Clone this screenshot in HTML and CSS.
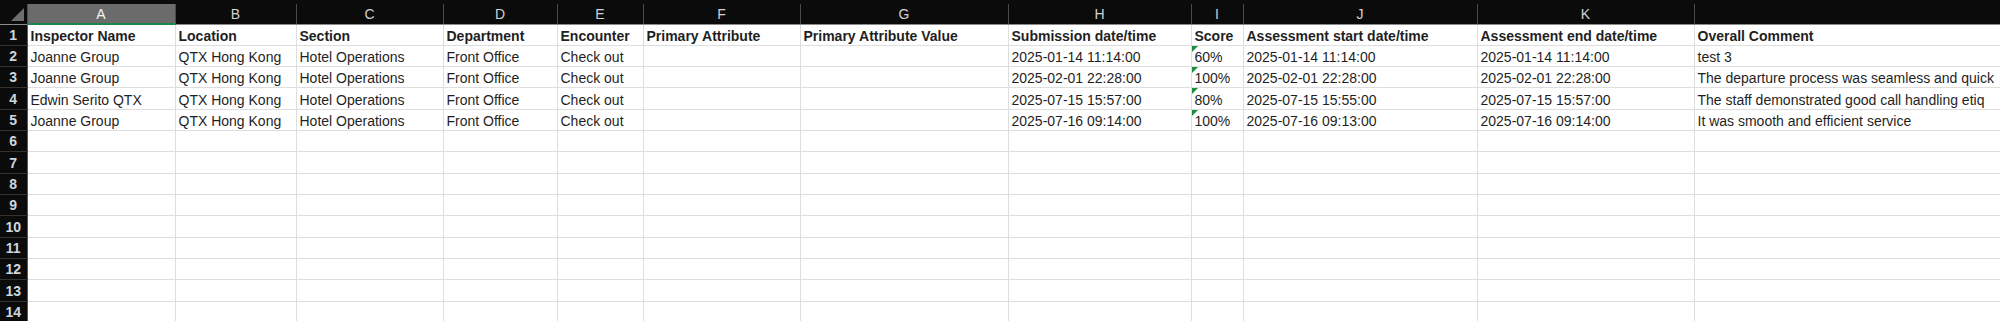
FILE: index.html
```html
<!DOCTYPE html>
<html lang="en">

<head>
    <meta charset="UTF-8">
    <meta name="viewport" content="width=device-width, initial-scale=1.0">
    <title>Inspections</title>
    <link rel="stylesheet" href="styles.css">
</head>

<body>
    <table class="sheet">
        <colgroup>
            <col class="col-rn">
            <col class="col-a">
            <col class="col-b">
            <col class="col-c">
            <col class="col-d">
            <col class="col-e">
            <col class="col-f">
            <col class="col-g">
            <col class="col-h">
            <col class="col-i">
            <col class="col-j">
            <col class="col-k">
            <col class="col-l">
        </colgroup>
        <thead>
            <tr class="letters">
                <th class="corner"><span class="corner-tri"></span></th>
                <th class="selected">A</th>
                <th>B</th>
                <th>C</th>
                <th>D</th>
                <th>E</th>
                <th>F</th>
                <th>G</th>
                <th>H</th>
                <th>I</th>
                <th>J</th>
                <th>K</th>
                <th></th>
            </tr>
        </thead>
        <tbody>
            <tr class="titles">
                <th class="rn">1</th>
                <td>Inspector Name</td>
                <td>Location</td>
                <td>Section</td>
                <td>Department</td>
                <td>Encounter</td>
                <td>Primary Attribute</td>
                <td>Primary Attribute Value</td>
                <td>Submission date/time</td>
                <td>Score</td>
                <td>Assessment start date/time</td>
                <td>Assessment end date/time</td>
                <td>Overall Comment</td>
            </tr>
            <tr>
                <th class="rn">2</th>
                <td>Joanne Group</td>
                <td>QTX Hong Kong</td>
                <td>Hotel Operations</td>
                <td>Front Office</td>
                <td>Check out</td>
                <td></td>
                <td></td>
                <td>2025-01-14 11:14:00</td>
                <td class="flag">60%</td>
                <td>2025-01-14 11:14:00</td>
                <td>2025-01-14 11:14:00</td>
                <td>test 3</td>
            </tr>
            <tr>
                <th class="rn">3</th>
                <td>Joanne Group</td>
                <td>QTX Hong Kong</td>
                <td>Hotel Operations</td>
                <td>Front Office</td>
                <td>Check out</td>
                <td></td>
                <td></td>
                <td>2025-02-01 22:28:00</td>
                <td class="flag">100%</td>
                <td>2025-02-01 22:28:00</td>
                <td>2025-02-01 22:28:00</td>
                <td>The departure process was seamless and quick</td>
            </tr>
            <tr>
                <th class="rn">4</th>
                <td>Edwin Serito QTX</td>
                <td>QTX Hong Kong</td>
                <td>Hotel Operations</td>
                <td>Front Office</td>
                <td>Check out</td>
                <td></td>
                <td></td>
                <td>2025-07-15 15:57:00</td>
                <td class="flag">80%</td>
                <td>2025-07-15 15:55:00</td>
                <td>2025-07-15 15:57:00</td>
                <td>The staff demonstrated good call handling etiq</td>
            </tr>
            <tr>
                <th class="rn">5</th>
                <td>Joanne Group</td>
                <td>QTX Hong Kong</td>
                <td>Hotel Operations</td>
                <td>Front Office</td>
                <td>Check out</td>
                <td></td>
                <td></td>
                <td>2025-07-16 09:14:00</td>
                <td class="flag">100%</td>
                <td>2025-07-16 09:13:00</td>
                <td>2025-07-16 09:14:00</td>
                <td>It was smooth and efficient service</td>
            </tr>
            <tr><th class="rn">6</th><td></td><td></td><td></td><td></td><td></td><td></td><td></td><td></td><td></td><td></td><td></td><td></td></tr>
            <tr><th class="rn">7</th><td></td><td></td><td></td><td></td><td></td><td></td><td></td><td></td><td></td><td></td><td></td><td></td></tr>
            <tr><th class="rn">8</th><td></td><td></td><td></td><td></td><td></td><td></td><td></td><td></td><td></td><td></td><td></td><td></td></tr>
            <tr><th class="rn">9</th><td></td><td></td><td></td><td></td><td></td><td></td><td></td><td></td><td></td><td></td><td></td><td></td></tr>
            <tr><th class="rn">10</th><td></td><td></td><td></td><td></td><td></td><td></td><td></td><td></td><td></td><td></td><td></td><td></td></tr>
            <tr><th class="rn">11</th><td></td><td></td><td></td><td></td><td></td><td></td><td></td><td></td><td></td><td></td><td></td><td></td></tr>
            <tr><th class="rn">12</th><td></td><td></td><td></td><td></td><td></td><td></td><td></td><td></td><td></td><td></td><td></td><td></td></tr>
            <tr><th class="rn">13</th><td></td><td></td><td></td><td></td><td></td><td></td><td></td><td></td><td></td><td></td><td></td><td></td></tr>
            <tr><th class="rn">14</th><td></td><td></td><td></td><td></td><td></td><td></td><td></td><td></td><td></td><td></td><td></td><td></td></tr>
        </tbody>
    </table>
</body>

</html>
```

FILE: styles.css
```css
body {
    margin: 0;
    padding-top: 4px;
    background-color: #0b0b0b;
    font-family: "Liberation Sans", Arial, sans-serif;
    overflow: hidden;
    width: 2000px;
    height: 321px;
}

.sheet {
    border-collapse: collapse;
    table-layout: fixed;
    width: 2094px;
    background-color: #ffffff;
}

.col-rn { width: 27px; }
.col-a { width: 148px; }
.col-b { width: 121px; }
.col-c { width: 147px; }
.col-d { width: 114px; }
.col-e { width: 86px; }
.col-f { width: 157px; }
.col-g { width: 208px; }
.col-h { width: 183px; }
.col-i { width: 52px; }
.col-j { width: 234px; }
.col-k { width: 217px; }
.col-l { width: 407px; }

tr {
    height: 21.33px;
}

tr.letters {
    height: 20px;
}

/* column letters */
.letters th {
    padding: 0;
    background-color: #0b0b0b;
    color: #d2d2d2;
    font-size: 14px;
    line-height: 16px;
    font-weight: normal;
    text-align: center;
    border-left: 1px solid #4a4a4a;
    border-bottom: 1px solid #8c8c8c;
}

.letters th.selected {
    background-color: #6b6b6b;
    color: #f2f2f2;
    border-bottom: 2px solid #1e8449;
}

.letters th.corner {
    position: relative;
    border-left: none;
}

.corner-tri {
    position: absolute;
    right: 3px;
    bottom: 3px;
    width: 0;
    height: 0;
    border-left: 13px solid transparent;
    border-bottom: 13px solid #6e6e6e;
}

/* row numbers */
.rn {
    padding: 0;
    background-color: #0b0b0b;
    color: #cfd6dd;
    font-size: 14px;
    line-height: 16px;
    font-weight: bold;
    text-align: center;
    border-top: 1px solid #333333;
    border-bottom: 1px solid #333333;
    border-right: 1px solid #5a5a5a;
}

td {
    padding: 0 3px 1px;
    color: #1f1f1f;
    font-size: 14px;
    line-height: 16px;
    white-space: nowrap;
    overflow: hidden;
    vertical-align: bottom;
    border: 1px solid #dedede;
}

.titles td {
    font-weight: bold;
}

.flag {
    position: relative;
}

.flag::before {
    content: "";
    position: absolute;
    top: 0;
    left: 0;
    width: 0;
    height: 0;
    border-top: 6px solid #1e8e3e;
    border-right: 6px solid transparent;
}
```
